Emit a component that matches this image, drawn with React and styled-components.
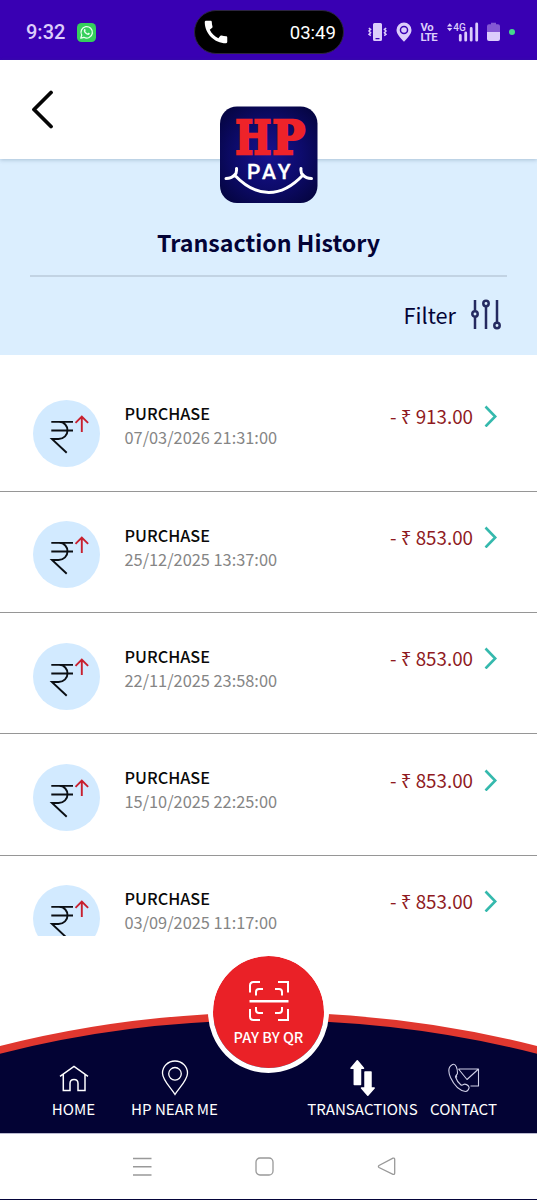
import React from 'react';
import styled, { createGlobalStyle } from 'styled-components';

const sans = '"Noto Sans CJK SC", "Noto Sans", sans-serif';

const GlobalStyle = createGlobalStyle`
  *, *::before, *::after { box-sizing: border-box; }
  body { margin: 0; background: #fff; font-family: ${sans}; }
  svg { display: block; flex: none; }
`;

const Screen = styled.div`
  width: 537px;
  height: 1200px;
  display: flex;
  flex-direction: column;
  overflow: hidden;
  background: #fff;
`;

/* ---------- status bar ---------- */

const StatusBar = styled.header`
  flex: none;
  height: 60px;
  display: grid;
  grid-template-columns: 194px 150px 1fr;
  align-items: center;
  padding-top: 4px;
  background: #3900b3;
  color: #dccdfb;
  font-family: Roboto, sans-serif;
`;

const StatusLeft = styled.div`
  display: flex;
  align-items: center;
  gap: 12px;
  padding-left: 26px;
`;

const Clock = styled.span`
  font-size: 20px;
  font-weight: 500;
  line-height: 24px;
`;

const CallPill = styled.div`
  height: 44px;
  display: flex;
  align-items: center;
  justify-content: space-between;
  padding: 0 7px 0 6px;
  border: 1.5px solid #2c2440;
  border-radius: 22px;
  background: #000;
  color: #fff;
  font-size: 18.6px;
  line-height: 24px;
`;

const CallTime = styled.span`
  padding-top: 2px;
`;

const StatusRight = styled.div`
  display: flex;
  align-items: center;
  padding-left: 24px;
`;

const StatusGap = styled.span`
  width: ${(p) => p.$width}px;
`;

const Volte = styled.div`
  width: 17px;
  margin: 2px 9px 0 9px;
  font: 700 11.3px/10px Roboto, sans-serif;
  letter-spacing: -0.5px;
`;

const LiveDot = styled.span`
  width: 6px;
  height: 6px;
  margin-left: 9px;
  border-radius: 50%;
  background: #45d98c;
`;

/* ---------- top bar and hero ---------- */

const TopBar = styled.div`
  flex: none;
  position: relative;
  height: 99px;
  display: flex;
  align-items: center;
  padding-left: 30px;
  background: #fff;
  box-shadow: 0 1px 4px rgba(40, 80, 110, 0.28);
`;

const LogoBadge = styled.div`
  position: absolute;
  left: 220px;
  top: 46px;
`;

const Hero = styled.section`
  flex: none;
  height: 196px;
  display: flex;
  flex-direction: column;
  padding: 66px 30px 0;
  background: #dbeefe;
  color: #030336;
`;

const Title = styled.h1`
  margin: 0;
  height: 52px;
  border-bottom: 2px solid #c2d3e3;
  font-size: 23.2px;
  font-weight: 700;
  line-height: 34px;
  text-align: center;
`;

const FilterButton = styled.button`
  align-self: flex-end;
  display: flex;
  align-items: center;
  gap: 14px;
  margin-top: 21px;
  padding: 0 5px 0 0;
  border: 0;
  background: none;
  color: inherit;
  font: 400 21.7px/34px ${sans};
`;

/* ---------- transactions ---------- */

const List = styled.ul`
  flex: none;
  height: 581px;
  margin: 0;
  padding: 15.7px 0 0;
  overflow: hidden;
  list-style: none;
`;

const Row = styled.li`
  height: 121.25px;
  display: grid;
  grid-template-columns: 67px 1fr auto;
  column-gap: 25px;
  align-items: start;
  padding: 29.5px 39px 0 32.5px;
  border-bottom: 1px solid #969696;
`;

const Details = styled.div`
  display: flex;
  flex-direction: column;
  padding-top: 1.3px;
`;

const Kind = styled.span`
  font-size: 16.3px;
  font-weight: 500;
  line-height: 24px;
  color: #0a0a0a;
`;

const Stamp = styled.span`
  font-size: 16.35px;
  line-height: 24px;
  color: #858585;
`;

const Amount = styled.div`
  display: flex;
  align-items: center;
  gap: 11px;
  padding-top: 1.7px;
  font-size: 18.8px;
  line-height: 28px;
  color: #8f1a22;
`;

/* ---------- bottom navigation ---------- */

const BottomNav = styled.nav`
  flex: none;
  position: relative;
  height: 197px;
  display: flex;
  align-items: flex-end;
  padding-bottom: 13px;
`;

const NavCurve = styled.svg`
  position: absolute;
  inset: 0;
`;

const NavItem = styled.a`
  position: relative;
  width: ${(p) => p.$width}px;
  margin-left: ${(p) => p.$before}px;
  display: flex;
  flex-direction: column;
  align-items: center;
  color: #fff;
  font-size: 15.1px;
  line-height: 24px;
  white-space: nowrap;
`;

const NavGlyph = styled.span`
  height: 36px;
  display: flex;
  align-items: center;
  justify-content: center;
`;

const QrButton = styled.button`
  position: absolute;
  left: 208px;
  top: 15px;
  width: 121px;
  height: 122px;
  display: flex;
  flex-direction: column;
  align-items: center;
  padding: 25px 0 0;
  border: 5px solid #fff;
  border-radius: 50%;
  background: #ea2127;
  background-clip: padding-box;
  color: #fff;
  font: 500 14.5px/20px ${sans};
  white-space: nowrap;
`;

const QrLabel = styled.span`
  margin-top: 6px;
`;

const SystemBar = styled.footer`
  flex: none;
  height: 67px;
  display: flex;
  justify-content: center;
  align-items: center;
  gap: 103px;
  padding-right: 9px;
  border-top: 1px solid #b9b9cf;
  border-bottom: 1px solid #04043a;
`;

/* ---------- drawings ---------- */

const WhatsApp = () => (
  <svg width="19" height="19" viewBox="0 0 19 19">
    <rect width="19" height="19" rx="4.5" fill="#35cf5c" />
    <path d="M3.8 15.2l.9-3.1a5.7 5.7 0 1 1 2.2 2.2z" fill="none" stroke="#e9fff0" strokeWidth="1.3" strokeLinejoin="round" />
    <path d="M7.2 6.2c.7-.6 1.1-.2 1.5 1 .1.4-.7.8-.5 1.1.6 1 1.300 1.700 2.300 2.200.4.1.8-.9 1.200-.7 1.100.5 1.500.8.9 1.500-.8 1-2.200.8-3.700-.2C7.200 9.800 6 7.700 7.200 6.200z" fill="#e9fff0" />
  </svg>
);

const Phone = () => (
  <svg width="30" height="30" viewBox="0 0 24 24" fill="#fff">
    <path d="M20.010 15.380c-1.230 0-2.420-.2-3.530-.56a.977.977 0 0 0-1.010.24l-1.570 1.970c-2.830-1.350-5.480-3.900-6.890-6.830l1.950-1.660c.27-.28.35-.67.24-1.020-.37-1.110-.56-2.300-.56-3.530 0-.54-.45-.99-.99-.99H4.190C3.650 3 3 3.240 3 3.990 3 13.280 10.730 21 20.010 21c.71 0 .99-.63.99-1.180v-3.450c0-.54-.45-.99-.99-.99z" />
  </svg>
);

const Vibrate = () => (
  <svg width="19" height="20" viewBox="0 0 19 20">
    <path fillRule="evenodd" d="M6.500 1h6q1.500 0 1.500 1.500v15q0 1.500-1.500 1.500h-6q-1.500 0-1.500-1.500v-15Q5 1 6.500 1zM7.500 16v1.200h4V16z" fill="#dccdfb" />
    <path d="M.8 6l1.800 1.300L1 9l1.600 1.700L1 12.400l1.800 1.300M18.200 6l-1.800 1.300L18 9l-1.600 1.700 1.600 1.700-1.800 1.300" fill="none" stroke="#dccdfb" strokeWidth="1.500" />
  </svg>
);

const Location = () => (
  <svg width="16" height="20" viewBox="0 0 16 20">
    <path fillRule="evenodd" d="M8 .500a7.500 7.500 0 0 1 7.500 7.500c0 4-3.600 7.500-7.500 11.700C4.100 15.500.500 12 .500 8A7.500 7.500 0 0 1 8 .500zM8 3.700a4.300 4.300 0 1 0 0 8.600A4.300 4.300 0 0 0 8 3.700z" fill="#dccdfb" />
    <circle cx="8" cy="8" r="2.800" fill="#dccdfb" />
  </svg>
);

const Signal = () => (
  <svg width="32" height="20" viewBox="0 0 32 20">
    <path d="M0 4.500L2.700 1.300 5.400 4.500zM0 6L2.700 9.200 5.400 6z" fill="#dccdfb" />
    <text x="6.300" y="9.300" fontFamily="Roboto, sans-serif" fontSize="11" fontWeight="500" fill="#dccdfb" textLength="12.500" lengthAdjust="spacingAndGlyphs">4G</text>
    <path d="M13.300 13.500v4.700M18.700 11v7.200M24.200 6.500v11.700M29.700 2v16.200" stroke="#dccdfb" strokeWidth="2.800" strokeLinecap="round" />
  </svg>
);

const Battery = () => (
  <svg width="13" height="20" viewBox="0 0 13 20">
    <path d="M4 .800h5v1.400h2q2 0 2 2V10H0V4.200q0-2 2-2h2z" fill="#8458d4" />
    <path d="M0 10h13v7q0 2-2 2H2q-2 0-2-2z" fill="#dccdfb" />
  </svg>
);

const BackChevron = () => (
  <svg width="26" height="40" viewBox="0 0 26 40">
    <path d="M21 2.500L4 19.500 21 36.500" fill="none" stroke="#050505" strokeWidth="3.800" strokeLinecap="round" strokeLinejoin="round" />
  </svg>
);

const logoLetter = {
  fontFamily: '"DejaVu Serif", serif',
  fontWeight: 700,
  fontSize: 46,
  fill: '#ee2329',
  stroke: '#ee2329',
  strokeWidth: 2.4,
  lengthAdjust: 'spacingAndGlyphs',
};

const Logo = () => (
  <svg width="98" height="97" viewBox="0 0 98 97">
    <defs>
      <radialGradient id="logoFill" cx="50%" cy="50%" r="68%">
        <stop offset="0" stopColor="#16128f" />
        <stop offset="0.500" stopColor="#0d0b6c" />
        <stop offset="1" stopColor="#04043c" />
      </radialGradient>
    </defs>
    <rect x="0" y="0.500" width="97.500" height="96.500" rx="17" fill="url(#logoFill)" />
    <text x="15.300" y="47.500" textLength="36" {...logoLetter}>H</text>
    <text x="52.300" y="47.500" textLength="33" {...logoLetter}>P</text>
    <text x="27" y="72.500" fontFamily='Roboto, sans-serif' fontWeight="500" fontSize="21" fill="#fff" stroke="#fff" strokeWidth="0.300" strokeLinejoin="round" textLength="43.500" lengthAdjust="spacing">PAY</text>
    <path d="M6 72.500Q11.500 72.500 14.500 69Q31 86.500 48.800 86.500T83 69Q86 72.500 91.500 72.500M16.500 62.500Q17 67 14.500 69.500M81 62.500Q80.500 67 83 69.500" fill="none" stroke="#fff" strokeWidth="3" strokeLinecap="round" />
  </svg>
);

const Sliders = () => (
  <svg width="32" height="32" viewBox="0 0 32 32" fill="none" stroke="#252a60" strokeWidth="2.500">
    <path d="M5 1v10.500M5 18v12M16 8v22M27 1v22" />
    <circle cx="5" cy="15" r="2.700" />
    <circle cx="16" cy="4.500" r="2.700" />
    <circle cx="27" cy="26.500" r="2.700" />
  </svg>
);

const RupeeOut = () => (
  <svg width="67" height="67" viewBox="0 0 67 67" fill="none">
    <circle cx="33.500" cy="33.500" r="33.500" fill="#d2eaff" />
    <path d="M18.300 21.900H40M18.300 30.500H40M18.300 21.900H26C31.500 21.900 34.500 26 34.500 30.500S31 39 25.500 39H19L33.700 52.800" stroke="#0b0f14" strokeWidth="1.900" />
    <path d="M48.800 32V16.800M42.500 22.800L48.800 16.500 55.100 22.800" stroke="#c8202f" strokeWidth="1.900" />
  </svg>
);

const Chevron = () => (
  <svg width="14" height="22" viewBox="0 0 14 22">
    <path d="M1.500 1.500L11.200 11.500 1.500 21.500" fill="none" stroke="#35b9ad" strokeWidth="2.600" />
  </svg>
);

const QrScan = () => (
  <svg width="40" height="40" viewBox="0 0 40 40" fill="none" stroke="#fff" strokeWidth="2">
    <path d="M1 11.500V4.500Q1 1 4.500 1H11M29 1H39V11.500M1 28V35.500Q1 39 4.500 39H11M29 39H39V28" />
    <path d="M7 14.500V11Q7 8 10 8H14M26 8H30Q33 8 33 11V14.500M7 26V29Q7 32 10 32H14M33 26V29Q33 32 30 32H26" />
    <path d="M0.500 20.200H39.500" strokeWidth="2.400" />
  </svg>
);

const HomeGlyph = () => (
  <svg width="30" height="28" viewBox="0 0 30 28" fill="none" stroke="#fff" strokeWidth="1.500">
    <path d="M1 12.300L15 2.500 29 12.300M4.300 10.500V26.500H11V19.500Q11 15.500 15 15.500T19 19.500V26.500H26V10.500" />
  </svg>
);

const PinGlyph = () => (
  <svg width="28" height="36" viewBox="0 0 28 36" fill="none" stroke="#fff" strokeWidth="1.300">
    <path d="M14 34.500C10 28 1.500 20 1.500 13.200A12.500 12.200 0 0 1 26.500 13.200C26.500 20 18 28 14 34.500z" />
    <circle cx="14" cy="13.800" r="6.300" />
  </svg>
);

const SwapGlyph = () => (
  <svg width="25" height="36" viewBox="0 0 25 36" fill="#fff" stroke="#fff" strokeWidth="1.500" strokeLinejoin="round">
    <path d="M7.300 .800L13.500 8.200H10.500V24.500H4.300V8.200H1z" />
    <path d="M15 12H21V28H24.200L17.800 35.200 11.500 28H15z" />
  </svg>
);

const ContactGlyph = () => (
  <svg width="32" height="30" viewBox="0 0 32 30" fill="none" stroke="#cfcfe6" strokeWidth="1.100" strokeLinejoin="round">
    <path d="M4.500 1.500C.500 3.500 0 8.500 2.500 14.500 6 22 11 27.500 17.500 28.500 19.500 28.500 21.500 25.500 21 24 20.500 22 17 20.500 15.500 21.500 14.500 22.200 14 22.500 13 22 10.500 20 8.500 17 7.500 14 7.300 12.500 9.500 12 9.500 10 9.500 6 8 .200 4.500 1.500z" />
    <path d="M10.500 6H30.500V23H22.500M10.500 6L19 16.500 30.500 6M8.500 11.500Q7.500 13 9 14.500" />
  </svg>
);

const items = [
  ['07/03/2026 21:31:00', '913.00'],
  ['25/12/2025 13:37:00', '853.00'],
  ['22/11/2025 23:58:00', '853.00'],
  ['15/10/2025 22:25:00', '853.00'],
  ['03/09/2025 11:17:00', '853.00'],
];

export default function App() {
  return (
    <Screen>
      <GlobalStyle />
      <StatusBar>
        <StatusLeft>
          <Clock>9:32</Clock>
          <WhatsApp />
        </StatusLeft>
        <CallPill>
          <Phone />
          <CallTime>03:49</CallTime>
        </CallPill>
        <StatusRight>
          <Vibrate />
          <StatusGap $width={8.5} />
          <Location />
          <Volte>Vo<br />LTE</Volte>
          <Signal />
          <StatusGap $width={8} />
          <Battery />
          <LiveDot />
        </StatusRight>
      </StatusBar>

      <TopBar>
        <BackChevron />
        <LogoBadge><Logo /></LogoBadge>
      </TopBar>

      <Hero>
        <Title>Transaction History</Title>
        <FilterButton>
          Filter
          <Sliders />
        </FilterButton>
      </Hero>

      <List>
        {items.map(([stamp, amount]) => (
          <Row key={stamp}>
            <RupeeOut />
            <Details>
              <Kind>PURCHASE</Kind>
              <Stamp>{stamp}</Stamp>
            </Details>
            <Amount>
              <span>- ₹ {amount}</span>
              <Chevron />
            </Amount>
          </Row>
        ))}
      </List>

      <BottomNav>
        <NavCurve width="537" height="197" viewBox="0 0 537 197">
          <path d="M0 110A1095 1095 0 0 1 537 110V197H0z" fill="#e0372f" />
          <path d="M0 117.700A1095 1095 0 0 1 537 117.700V197H0z" fill="#030334" />
        </NavCurve>
        <NavItem $width={60} $before={43.5}>
          <NavGlyph><HomeGlyph /></NavGlyph>
          HOME
        </NavItem>
        <NavItem $width={100} $before={21}>
          <NavGlyph><PinGlyph /></NavGlyph>
          HP NEAR ME
        </NavItem>
        <NavItem $width={112} $before={82}>
          <NavGlyph><SwapGlyph /></NavGlyph>
          TRANSACTIONS
        </NavItem>
        <NavItem $width={70} $before={10}>
          <NavGlyph><ContactGlyph /></NavGlyph>
          CONTACT
        </NavItem>
        <QrButton>
          <QrScan />
          <QrLabel>PAY BY QR</QrLabel>
        </QrButton>
      </BottomNav>

      <SystemBar>
        <svg width="19" height="19" viewBox="0 0 19 19"><path d="M0 1.500H18.500M0 9.700H18.500M0 18H18.500" stroke="#999" strokeWidth="1.400" /></svg>
        <svg width="19" height="19" viewBox="0 0 19 19"><rect x="1" y="1" width="17" height="17" rx="4" fill="none" stroke="#999" strokeWidth="1.300" /></svg>
        <svg width="19" height="19" viewBox="0 0 19 19"><path d="M16 1.200L2 8.500Q.800 9.500 2 10.500L16 17.300Q17.700 17.800 17.700 16V2.500Q17.700 .800 16 1.200z" fill="none" stroke="#999" strokeWidth="1.300" /></svg>
      </SystemBar>
    </Screen>
  );
}
